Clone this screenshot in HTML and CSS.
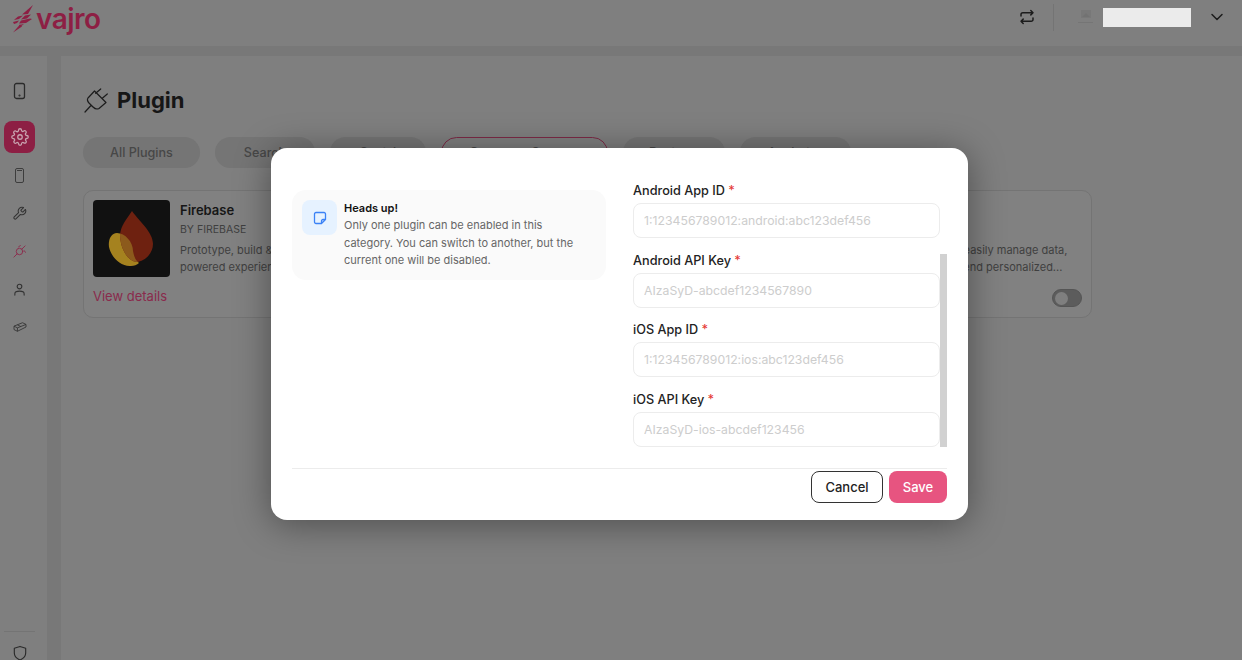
FILE: index.html
```html
<!DOCTYPE html>
<html lang="en">
<head>
  <meta charset="UTF-8">
  <meta name="viewport" content="width=device-width, initial-scale=1.0">
  <title>Plugin</title>
  <link rel="stylesheet" href="styles.css">
</head>
<body>
  <header class="topbar">
    <div class="logo">
      <svg class="logo-mark" width="22" height="28" viewBox="0 0 22 28" fill="#8d1f44">
        <path d="M21 0L10 9.500L16 9Z"/>
        <path d="M6 11.500L11 10.500L7 14L2 15Z"/>
        <path d="M13 10.500L19 9.500L15 13.500L9 14.500Z"/>
        <path d="M1 17L7 15.500L5 18L2 19Z"/>
        <path d="M9 15.500L18 13.500L20 14L14 18L7 18.500Z"/>
        <path d="M7 20L12 19L8 22Z"/>
        <path d="M1 27.500L8 19.500L10 21.500Z"/>
      </svg>
      <span class="logo-text">vajro</span>
    </div>
    <div class="topbar-right">
      <svg class="swap" width="16" height="16" viewBox="0 0 16 16" fill="none" stroke="#1c1c1c" stroke-width="1.5" stroke-linecap="round" stroke-linejoin="round">
        <path d="M2 7V5.500A1.800 1.800 0 0 1 3.800 3.700H14M11.800 1.500L14 3.700L11.800 5.900M14 9V10.500A1.800 1.800 0 0 1 12.200 12.300H2M4.200 10.100L2 12.300L4.200 14.500"/>
      </svg>
      <span class="topbar-divider"></span>
      <svg class="avatar" width="18" height="18" viewBox="0 0 18 18">
        <rect x="4" y="2" width="10" height="8" fill="#787878"/>
        <path d="M5 9L9 5L13 9Z" fill="#727272"/>
        <rect x="1" y="14" width="15" height="1" fill="#757575"/>
      </svg>
      <span class="user-box"></span>
      <svg class="chevron" width="14" height="14" viewBox="0 0 14 14" fill="none" stroke="#1c1c1c" stroke-width="1.500" stroke-linecap="round" stroke-linejoin="round">
        <path d="M2 4.500L7 9.500L12 4.500"/>
      </svg>
    </div>
  </header>

  <div class="layout">
    <nav class="sidebar">
      <a class="side-item side-first">
        <svg width="14" height="18" viewBox="0 0 14 18" fill="none" stroke="#2b2b2b" stroke-width="1.300"><rect x="1.500" y="1.500" width="10" height="15" rx="2"/><circle cx="6.500" cy="13.500" r=".4"/></svg>
      </a>
      <a class="side-item side-active">
        <svg width="18" height="18" viewBox="0 0 24 24" fill="none" stroke="#c9a4b0" stroke-width="1.700" stroke-linecap="round" stroke-linejoin="round"><circle cx="12" cy="12" r="3"/><path d="M19.400 15a1.650 1.650 0 0 0 .33 1.820l.06.06a2 2 0 1 1-2.830 2.830l-.06-.06a1.650 1.650 0 0 0-2.800 1.170V21a2 2 0 0 1-4 0v-.09a1.650 1.650 0 0 0-2.800-1.120l-.06.06a2 2 0 1 1-2.830-2.830l.06-.06a1.650 1.650 0 0 0-1.170-2.800H3a2 2 0 0 1 0-4h.09a1.650 1.650 0 0 0 1.120-2.800l-.06-.06a2 2 0 1 1 2.830-2.830l.06.06a1.650 1.650 0 0 0 1.820.33H9a1.650 1.650 0 0 0 1-1.510V3a2 2 0 0 1 4 0v.09a1.650 1.650 0 0 0 2.800 1.120l.06-.06a2 2 0 1 1 2.830 2.830l-.06.06a1.650 1.650 0 0 0-.33 1.820V9a1.650 1.650 0 0 0 1.510 1H21a2 2 0 0 1 0 4h-.09a1.650 1.650 0 0 0-1.510 1z"/></svg>
      </a>
      <a class="side-item">
        <svg width="12" height="17" viewBox="0 0 12 17" fill="none" stroke="#3d3d3d" stroke-width="1"><rect x="1.500" y="1.500" width="8" height="14" rx="1.500"/><path d="M3 3.500H8"/></svg>
      </a>
      <a class="side-item">
        <svg width="15" height="15" viewBox="0 0 24 24" fill="none" stroke="#333" stroke-width="1.700" stroke-linecap="round" stroke-linejoin="round"><path d="M14.700 6.300a1 1 0 0 0 0 1.400l1.600 1.600a1 1 0 0 0 1.400 0l3.770-3.770a6 6 0 0 1-7.940 7.940l-6.910 6.910a2.120 2.120 0 0 1-3-3l6.910-6.910a6 6 0 0 1 7.940-7.940l-3.760 3.760z"/></svg>
      </a>
      <a class="side-item">
        <svg width="13" height="13" viewBox="0 0 14 14" fill="none" stroke="#8d2a4c" stroke-width="1" stroke-linecap="round"><circle cx="7" cy="7" r="3.500"/><path d="M1 13L4.500 9.500M9.500 4.500L13 1M6 2L8 0.500M12 6L13.500 8"/></svg>
      </a>
      <a class="side-item">
        <svg width="13" height="13" viewBox="0 0 14 14" fill="none" stroke="#333" stroke-width="1.200" stroke-linecap="round"><circle cx="7" cy="3.800" r="2.500"/><path d="M2 13V11.500C2 9.800 3.500 8.800 7 8.800C10.500 8.800 12 9.800 12 11.500V13"/></svg>
      </a>
      <a class="side-item">
        <svg width="14" height="12" viewBox="0 0 16 14" fill="none" stroke="#333" stroke-width="1" stroke-linejoin="round"><path d="M1 6L11 2L15 4V7L5 12L1 10Z M1 6L5 8L15 4 M5 8V12 M5 4.500L9 6.500"/></svg>
      </a>
      <div class="side-bottom">
        <svg width="14" height="16" viewBox="0 0 16 18" fill="none" stroke="#2b2b2b" stroke-width="1.300" stroke-linejoin="round"><path d="M8 1.500L14.500 3.500V9C14.500 13 11.500 15.500 8 17C4.500 15.500 1.500 13 1.500 9V3.500Z"/></svg>
      </div>
    </nav>

    <main class="content">
      <h1 class="page-title">
        <svg width="26" height="26" viewBox="-1 -1 26 26" fill="none" stroke="#1c1c1c" stroke-width="1.200" stroke-linecap="round" stroke-linejoin="round">
          <path d="M11.700 5.300L16.700 1M18.300 10.300L23.300 6M10.500 3L22 14.500L15 20.500Q12 22 9 19L5 15Q2.500 12 4 10ZM1 24L6.500 18"/>
        </svg>
        Plugin
      </h1>

      <div class="tabs">
        <span class="tab">All Plugins</span>
        <span class="tab">Search</span>
        <span class="tab">Social</span>
        <span class="tab tab-active">Customer Support</span>
        <span class="tab">Reviews</span>
        <span class="tab">Analytics</span>
      </div>

      <div class="cards">
        <article class="card">
          <div class="card-top">
            <div class="card-img">
              <svg width="77" height="77" viewBox="0 0 77 77">
                <defs>
                  <clipPath id="flame-left">
                    <path d="M24 33C18 33 15 40 16 47C18 57 28 67 38 66C41 66 44 65 46 63C42 60 41 56 40 51C40 42 32 33 24 33Z"/>
                  </clipPath>
                </defs>
                <path d="M24 33C18 33 15 40 16 47C18 57 28 67 38 66C41 66 44 65 46 63C42 60 41 56 40 51C40 42 32 33 24 33Z" fill="#a5821f"/>
                <path d="M39 11C33 20 28 25 27 35C27 45 33 62 45 62C54 60 60 52 60 44C60 32 46 21 39 11Z" fill="#6e2110"/>
                <path clip-path="url(#flame-left)" d="M39 11C33 20 28 25 27 35C27 45 33 62 45 62C54 60 60 52 60 44C60 32 46 21 39 11Z" fill="#8c5a1c"/>
              </svg>
            </div>
            <div class="card-info">
              <h3>Firebase</h3>
              <p class="card-by">BY FIREBASE</p>
              <p class="card-desc">Prototype, build &amp; AI-<br>powered experiences</p>
            </div>
          </div>
          <a class="card-link">View details</a>
        </article>

        <article class="card">
          <div class="card-top">
            <div class="card-img"></div>
          </div>
        </article>

        <article class="card">
          <div class="card-top">
            <div class="card-img"></div>
            <div class="card-info card-info-low">
              <p class="card-desc">Unify all shoppers, easily manage data,<br>segment lists and send personalized...</p>
            </div>
          </div>
          <div class="card-foot">
            <span class="toggle"><span class="toggle-knob"></span></span>
          </div>
        </article>
      </div>
    </main>
  </div>

  <div class="modal">
    <div class="modal-body">
      <div class="notice">
        <span class="notice-icon">
          <svg width="14" height="14" viewBox="0 0 14 14" fill="none" stroke="#3b82f6" stroke-width="1.300" stroke-linejoin="round">
            <path d="M8.500 12.500H3A1.500 1.500 0 0 1 1.500 11V3A1.500 1.500 0 0 1 3 1.500H11A1.500 1.500 0 0 1 12.500 3V8.500H10A1.500 1.500 0 0 0 8.500 10V12.500L12.500 8.500"/>
          </svg>
        </span>
        <div class="notice-text">
          <strong>Heads up!</strong>
          <p>Only one plugin can be enabled in this category. You can switch to another, but the current one will be disabled.</p>
        </div>
      </div>

      <form class="fields">
        <div class="field">
          <label>Android App ID <span class="req">*</span></label>
          <input type="text" placeholder="1:123456789012:android:abc123def456">
        </div>
        <div class="field">
          <label>Android API Key <span class="req">*</span></label>
          <input type="text" placeholder="AIzaSyD-abcdef1234567890">
        </div>
        <div class="field">
          <label>iOS App ID <span class="req">*</span></label>
          <input type="text" placeholder="1:123456789012:ios:abc123def456">
        </div>
        <div class="field">
          <label>iOS API Key <span class="req">*</span></label>
          <input type="text" placeholder="AIzaSyD-ios-abcdef123456">
        </div>
        <span class="scroll-thumb"></span>
      </form>
    </div>
    <div class="modal-foot">
      <button class="btn btn-cancel" type="button">Cancel</button>
      <button class="btn btn-save" type="button">Save</button>
    </div>
  </div>
</body>
</html>
```

FILE: styles.css
```css
* {
  box-sizing: border-box;
}

html, body {
  height: 100%;
}

body {
  margin: 0;
  overflow: hidden;
  font-family: Inter, "Open Sans", sans-serif;
  background-color: #7f7f7f;
  color: #1c1c1c;
}

.topbar {
  height: 46px;
  display: flex;
  justify-content: space-between;
  align-items: center;
  padding: 0 18px 0 12px;
  background-color: #7f7f7f;
}

.logo {
  display: flex;
  align-items: center;
  margin-top: -8px;
}

.logo-mark {
  flex-shrink: 0;
  margin-right: 2px;
}

.logo-text {
  font-size: 28px;
  font-weight: 600;
  letter-spacing: -0.5px;
  line-height: 28px;
  color: #8d1f44;
}

.topbar-right {
  display: flex;
  align-items: center;
  margin-top: -12px;
}

.topbar-divider {
  width: 1px;
  height: 27px;
  margin: 0 23px 0 18px;
  background-color: #747474;
}

.avatar {
  margin-right: 8px;
}

.user-box {
  width: 88px;
  height: 19px;
  margin-right: 19px;
  background-color: #ebebeb;
}

.layout {
  height: 614px;
  display: flex;
  padding-top: 10px;
  background-color: #787878;
}

.sidebar {
  width: 47px;
  margin-right: 14px;
  padding: 19px 12px 0 4px;
  display: flex;
  flex-direction: column;
  align-items: stretch;
  gap: 6px;
  background-color: #7f7f7f;
}

.side-item {
  height: 32px;
  display: flex;
  align-items: center;
  justify-content: center;
  border-radius: 8px;
}

.side-first {
  margin-bottom: 8px;
}

.side-active {
  background-color: #8d1f44;
}

.side-bottom {
  margin-top: auto;
  height: 29px;
  padding-top: 13px;
  display: flex;
  justify-content: center;
  border-top: 1px solid #747474;
  flex-shrink: 0;
}

.content {
  flex: 1;
  padding: 0 150px 0 22px;
  background-color: #7f7f7f;
}

.page-title {
  display: flex;
  align-items: center;
  gap: 8px;
  height: 36px;
  margin: 26px 0 0;
  font-size: 22px;
  font-weight: 700;
  color: #161616;
}

.tabs {
  display: grid;
  grid-template-columns: 117px 100px 96px 167px 102px 111px;
  gap: 15px;
  margin-top: 19px;
}

.tab {
  height: 31px;
  padding-bottom: 1px;
  display: flex;
  align-items: center;
  justify-content: center;
  border-radius: 16px;
  font-size: 12.600px;
  font-weight: 500;
  white-space: nowrap;
  color: #474747;
  background-color: #757575;
}

.tab-active {
  border: 1px solid #7d2a46;
  background-color: transparent;
}

.cards {
  display: grid;
  grid-template-columns: repeat(3, 1fr);
  gap: 16px;
  margin-top: 22px;
}

.card {
  height: 128px;
  padding: 9px;
  border: 1px solid #747474;
  border-radius: 10px;
  background-color: #818181;
}

.card-top {
  display: flex;
  gap: 10px;
}

.card-img {
  width: 77px;
  height: 77px;
  flex-shrink: 0;
  border-radius: 4px;
  background-color: #111;
}

.card-info h3 {
  margin: 2px 0 0;
  font-size: 13px;
  font-weight: 600;
  line-height: 17px;
  color: #161616;
}

.card-by {
  margin: 3px 0 0;
  font-size: 10.500px;
  line-height: 15px;
  color: #3f3f3f;
}

.card-desc {
  margin: 5px 0 0;
  font-size: 11px;
  line-height: 17px;
  color: #3f3f3f;
}

.card-info-low {
  padding-top: 37px;
  white-space: nowrap;
}

.card-link {
  display: block;
  margin-top: 11px;
  font-size: 13px;
  color: #8a2a4c;
}

.card-foot {
  display: flex;
  justify-content: flex-end;
  margin-top: 12px;
}

.toggle {
  width: 30px;
  height: 18px;
  padding: 2px;
  border: 1px solid #555;
  border-radius: 9px;
  background-color: #5c5c5c;
}

.toggle-knob {
  display: block;
  width: 13px;
  height: 13px;
  border-radius: 50%;
  background-color: #7f7f7f;
}

/* dialog sits over the page */
.modal {
  position: absolute;
  left: 271px;
  top: 148px;
  width: 697px;
  height: 372px;
  padding: 0 21px;
  border-radius: 16px;
  background-color: #fff;
  box-shadow: 0 4px 36px rgba(0, 0, 0, 0.4);
}

.modal-body {
  display: flex;
  height: 321px;
  padding-top: 34px;
  border-bottom: 1px solid #ececec;
}

.notice {
  width: 314px;
  height: 90px;
  margin-top: 8px;
  padding: 10px;
  display: flex;
  gap: 7px;
  border-radius: 14px;
  background-color: #fafafa;
}

.notice-icon {
  width: 35px;
  height: 35px;
  flex-shrink: 0;
  display: flex;
  align-items: center;
  justify-content: center;
  border-radius: 8px;
  background-color: #e6f2ff;
}

.notice-text {
  width: 236px;
  font-size: 11px;
  line-height: 17.400px;
}

.notice-text strong {
  display: block;
  font-weight: 600;
  color: #111;
}

.notice-text p {
  margin: 0;
  color: #666;
}

.fields {
  position: relative;
  width: 314px;
  margin-left: 27px;
  display: flex;
  flex-direction: column;
  gap: 13.600px;
}

.field label {
  display: block;
  height: 21px;
  padding-top: 1px;
  font-size: 12.700px;
  font-weight: 500;
  line-height: 16px;
  color: #222;
}

.field input {
  display: block;
  width: 307px;
  height: 35px;
  padding: 0 10px;
  border: 1px solid #ececec;
  border-radius: 8px;
  font-family: inherit;
  font-size: 12.250px;
  outline: none;
}

.field input::placeholder {
  color: #cdcdcd;
}

.req {
  color: #e53935;
}

.scroll-thumb {
  position: absolute;
  right: 0;
  top: 72px;
  width: 7px;
  height: 193px;
  background-color: #d1d1d1;
}

.modal-foot {
  display: flex;
  justify-content: flex-end;
  gap: 6px;
  padding-top: 2px;
}

.btn {
  height: 32px;
  border-radius: 8px;
  font-family: inherit;
  font-size: 13px;
  font-weight: 500;
  cursor: pointer;
}

.btn-cancel {
  width: 72px;
  border: 1px solid #333;
  color: #222;
  background-color: #fff;
}

.btn-save {
  width: 58px;
  border: none;
  color: #fff;
  background-color: #e75480;
}
```
